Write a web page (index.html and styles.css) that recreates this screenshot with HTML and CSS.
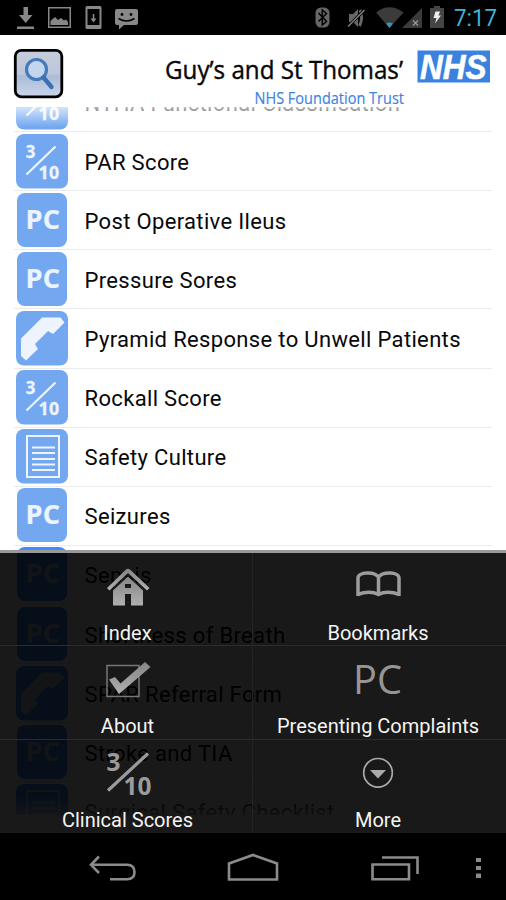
FILE: index.html
```html
<!DOCTYPE html>
<html lang="en">
<head>
<meta charset="utf-8">
<title>Guy's and St Thomas' Clinical Guide</title>
<link rel="stylesheet" href="styles.css">
</head>
<body>
<svg class="defs" width="0" height="0">
  <linearGradient id="metal" x2="0" y2="1"><stop stop-color="#858585"/><stop offset="1" stop-color="#b0b0b0"/></linearGradient>
  <symbol id="score" viewBox="0 0 52 55"><rect width="52" height="54.5" rx="8" fill="var(--tile)"/><g fill="var(--mark)" stroke="var(--mark)" stroke-width=".3" font-family="Open Sans, sans-serif" font-weight="700" font-size="17.500"><text x="9.800" y="24" textLength="10" lengthAdjust="spacingAndGlyphs">3</text><text x="22.500" y="44.700" textLength="21" lengthAdjust="spacingAndGlyphs">10</text></g><path d="M10.500 40.500L39.500 12.500" stroke="var(--mark)" stroke-width="2.200"/></symbol>
  <symbol id="pc" viewBox="0 0 52 55"><rect x="1" width="50" height="54" rx="8" fill="var(--tile)"/><text x="9.500" y="36" fill="var(--mark)" stroke="var(--mark)" stroke-width=".2" font-family="Open Sans, sans-serif" font-weight="700" font-size="27.500" textLength="35" lengthAdjust="spacingAndGlyphs">PC</text></symbol>
  <symbol id="phone" viewBox="0 0 52 55"><rect width="52" height="54.500" rx="8" fill="var(--tile)"/><path d="M26 6.500H44.500L48.500 11.500L37 23L32 20L19 33L22 38L10 49.500L5 45V27.500Z" fill="var(--mark)"/></symbol>
  <symbol id="doc" viewBox="0 0 52 55"><rect width="52" height="54.500" rx="8" fill="var(--tile)"/><path d="M11 7H43V48H11ZM16 18.500H39M16 24H39M16 30H39M16 35.500H39M16 41H39" fill="none" stroke="var(--mark)" stroke-width="2"/></symbol>
</svg>
<div class="screen">
  <header class="status">
    <svg width="506" height="35" viewBox="0 0 506 35">
      <g fill="#888">
        <path d="M23.500 7H28V15H32.500L25.700 23L19 15H23.500ZM17 26.500H34V29H17Z"/>
        <path fill-rule="evenodd" d="M48 7H71V28H48ZM49.500 8.500V26.500H69.500V8.500Z"/><path d="M50.500 25V21L55 17L58 20L61 18L64 20.500L66 19.500L68 22V25Z"/>
        <path fill-rule="evenodd" d="M87 6H100Q101.500 6 101.500 7.500V27.500Q101.500 29 100 29H87Q85.500 29 85.500 27.500V7.500Q85.500 6 87 6ZM87.500 9V25H99.500V9Z"/><path d="M92.700 14H94.300V18.500H96.500L93.500 22.500L90.500 18.500H92.700Z"/>
        <path d="M117 9H136Q138 9 138 11V23Q138 25 136 25H124L119 29.500V25H117Q115 25 115 23V11Q115 9 117 9Z"/>
      </g>
      <circle cx="122" cy="14.500" r="1.400"/><circle cx="131" cy="14.500" r="1.400"/><path d="M118.500 18.500Q126.500 23.500 134.500 18.500" fill="none" stroke="#000" stroke-width="1.500"/>
      <rect x="315.500" y="7.500" width="14" height="20" rx="5.500" fill="#666"/><path d="M318.500 13L326.500 21.500L322.300 25V10L326.500 13.500L318.500 21.500" fill="none" stroke="#000" stroke-width="1.500"/>
      <path d="M349 14H353L358 9V27L353 22H349Z" fill="#666"/><path d="M360 10Q363.500 17.500 359.500 26" stroke="#666" stroke-width="3" fill="none"/><path d="M348 26.500L364.500 10" stroke="#000" stroke-width="3"/><path d="M348 26.500L364.500 10" stroke="#888" stroke-width="1.300"/>
      <path d="M376 12.500Q389.500 2 403.500 12.500L389.500 28Z" fill="#3b3b3b"/><path d="M386 23.500Q389.500 21.500 393 23.500L389.500 28Z" fill="#3199bd"/>
      <path d="M422 8V28H402Z" fill="#3b3b3b"/><path d="M413 20.500L418 25.500M418 20.500L413 25.500" stroke="#999" stroke-width="1.200"/>
      <path d="M430 8H434V6H440V8H444V28H430Z" fill="#454545"/><path d="M435.500 11.500H440L438.500 15.500H441L435 23.500L436.500 18H433.500Z" fill="#eee"/>
      <text x="454" y="26" font-family="Roboto, sans-serif" font-size="24" fill="#42b2dc" textLength="43" lengthAdjust="spacingAndGlyphs">7:17</text>
    </svg>
  </header>
  <div class="brand">
    <svg width="506" height="72" viewBox="0 35 506 72">
      <defs><linearGradient id="glass" x2="0" y2="1"><stop stop-color="#c6ccda"/><stop offset=".5" stop-color="#bdc8dc"/><stop offset=".55" stop-color="#acbcd6"/><stop offset="1" stop-color="#c8d4eb"/></linearGradient></defs>
      <rect x="15.300" y="50.300" width="46.500" height="46.500" rx="6" fill="url(#glass)" stroke="#000" stroke-width="2.800"/>
      <circle cx="36.500" cy="69.500" r="10" fill="#c4d6ee" stroke="#437cbb" stroke-width="3.200"/><path d="M43.500 77.500L51.500 87" stroke="#3c70b0" stroke-width="4.300" stroke-linecap="round"/>
      <text x="165" y="79" font-family="Open Sans, sans-serif" font-size="25" fill="#080808" stroke="#080808" stroke-width=".4" textLength="238" lengthAdjust="spacingAndGlyphs">Guy’s and St Thomas’</text>
      <text x="254.500" y="103.500" font-family="Open Sans, sans-serif" font-size="15.500" fill="#3d83df" stroke="#3d83df" stroke-width=".15" textLength="149.500" lengthAdjust="spacingAndGlyphs">NHS Foundation Trust</text>
      <rect x="417.500" y="50.500" width="72.500" height="32" fill="#3b82df"/><text x="420" y="79.300" font-family="Liberation Sans, sans-serif" font-size="35.500" font-weight="700" font-style="italic" fill="#fff" stroke="#fff" stroke-width=".6" textLength="66.500" lengthAdjust="spacingAndGlyphs">NHS</text>
    </svg>
  </div>
  <main class="viewport">
    <ul class="list">
      <li class="row"><svg class="tile"><use href="#score"/></svg><span>NYHA Functional Classification</span></li>
      <li class="row"><svg class="tile"><use href="#score"/></svg><span>PAR Score</span></li>
      <li class="row"><svg class="tile"><use href="#pc"/></svg><span>Post Operative Ileus</span></li>
      <li class="row"><svg class="tile"><use href="#pc"/></svg><span>Pressure Sores</span></li>
      <li class="row"><svg class="tile"><use href="#phone"/></svg><span>Pyramid Response to Unwell Patients</span></li>
      <li class="row"><svg class="tile"><use href="#score"/></svg><span>Rockall Score</span></li>
      <li class="row"><svg class="tile"><use href="#doc"/></svg><span>Safety Culture</span></li>
      <li class="row"><svg class="tile"><use href="#pc"/></svg><span>Seizures</span></li>
      <li class="row covered"><svg class="tile"><use href="#pc"/></svg><span>Sepsis</span></li>
      <li class="row covered"><svg class="tile"><use href="#pc"/></svg><span>Shortness of Breath</span></li>
      <li class="row covered"><svg class="tile"><use href="#phone"/></svg><span>SPAR Referral Form</span></li>
      <li class="row covered"><svg class="tile"><use href="#pc"/></svg><span>Stroke and TIA</span></li>
      <li class="row covered"><svg class="tile"><use href="#doc"/></svg><span>Surgical Safety Checklist</span></li>
    </ul>
  </main>
  <section class="menu">
    <a class="item"><svg width="50" height="50" viewBox="102 562 50 50"><path fill="url(#metal)" d="M106 588L125 569.500Q127 567.800 129 569.500L148.500 588L146 590.500L127 573L108.500 590.500Z"/><path fill="url(#metal)" fill-rule="evenodd" d="M112 590.500L127 576.500L142 590.500V605.500H130V594H124V605.500H112ZM124 584V588H130V584Z"/></svg><span>Index</span></a>
    <a class="item"><svg width="50" height="50" viewBox="353 562 50 50"><path fill="none" stroke="#9c9c9c" stroke-width="3.500" d="M358 596V578C358 572 374 571 378.500 577C383 571 399 572 399 578V596M378.500 577V594M357.500 594.500Q370 590 378.500 594.500Q387 590 399.500 594.500"/></svg><span>Bookmarks</span></a>
    <a class="item"><svg width="50" height="50" viewBox="102 655.500 50 50"><rect x="106" y="666" width="32" height="31" fill="none" stroke="#777" stroke-width="1.500"/><path fill="url(#metal)" d="M108 680L114 677.500L119.500 684L144 662.500L149.500 667.500L118 694.500Z"/></svg><span>About</span></a>
    <a class="item"><svg width="50" height="50" viewBox="353 655.500 50 50"><text x="353" y="694" font-family="Open Sans, sans-serif" font-size="39.500" fill="#969696" textLength="49" lengthAdjust="spacingAndGlyphs">PC</text></svg><span>Presenting Complaints</span></a>
    <a class="item"><svg width="50" height="50" viewBox="102 749 50 50"><g fill="#9b9b9b" font-family="Open Sans, sans-serif" font-weight="700" font-size="25"><text x="105.500" y="771" textLength="14" lengthAdjust="spacingAndGlyphs">3</text><text x="122.500" y="795" textLength="28" lengthAdjust="spacingAndGlyphs">10</text></g><path d="M107 790.500L147 753.500" stroke="#9b9b9b" stroke-width="3.200"/></svg><span>Clinical Scores</span></a>
    <a class="item"><svg width="50" height="50" viewBox="353 749 50 50"><circle cx="378" cy="772.800" r="14.300" fill="none" stroke="#aaa" stroke-width="1.700"/><path d="M370 770H386L378 778.500Z" fill="#aaa"/></svg><span>More</span></a>
  </section>
  <footer class="nav">
    <svg width="506" height="67" viewBox="0 833 506 67" fill="none" stroke="#8b8b8b" stroke-width="2.600">
      <path d="M99 856.500L91 864.800L99 873M91 864.800H127Q134.500 865 134.500 872Q134.500 879.200 127 879.200H110"/>
      <path d="M229 863.500L253 855L277 863.500V879.500H229Z"/><path d="M372.500 864.500H409V879.200H372.500ZM382 857.500H417.500V874"/>
      <path fill="#8b8b8b" stroke="none" d="M476 858H481V862H476ZM476 866H481V870H476ZM476 873.500H481V878H476Z"/>
    </svg>
  </footer>
</div>
</body>
</html>
```
FILE: styles.css
```css
* { box-sizing: border-box; }
body { margin: 0; background: #000; font-family: Roboto, "Liberation Sans", sans-serif; }
svg { display: block; flex: none; }
.defs { position: absolute; }
.screen { --tile: #73a8f0; --mark: #edf4fe; position: relative; width: 506px; height: 900px; overflow: hidden; display: flex; flex-direction: column; }
.status { height: 35px; background: #000; }
.brand { height: 72px; background: #fff; }
.viewport { position: relative; height: 726px; padding: 0 14px; background: #fff; overflow: hidden; }
.viewport::before { content: ""; position: absolute; inset: 0 0 auto; height: 20px; background: linear-gradient(#ffffffb0, #fff0); }
.viewport::after { content: ""; position: absolute; inset: 688px 0 0; background: linear-gradient(#fff0, #ffffffa0 20px, #fff 20px); }
.list { list-style: none; margin: -33.900px 0 0; padding: 0; }
.row { height: 59.100px; border-bottom: 1.500px solid #e9ebec; padding-left: 2px; display: flex; align-items: center; gap: 16.500px; font-size: 22px; letter-spacing: .34px; color: #080808; white-space: nowrap; }
.covered { --tile: #3d8cff; --mark: #b5c5d8; color: #000; }
.tile { width: 52px; height: 55px; }
.row span { padding-top: 2px; }
.menu { position: absolute; top: 550px; left: 0; width: 506px; height: 283px; border-top: 3px solid #999; background: rgba(0,0,0,.9); display: grid; grid-template-columns: 253px 253px; grid-template-rows: 93px 93.500px 93.500px; }
.item { display: flex; flex-direction: column; align-items: center; padding: 9px 3px 0 0; border-bottom: 1px solid #2c2c2c; font-size: 20px; line-height: 24px; color: #f4f4f4; }
.item:nth-child(odd) { border-right: 1px solid #242424; padding: 9px 0 0 3px; }
.item span { margin-top: 9px; }
.item:nth-last-child(-n+2) { border-bottom: 0; }
.nav { height: 67px; background: #000; }
```
